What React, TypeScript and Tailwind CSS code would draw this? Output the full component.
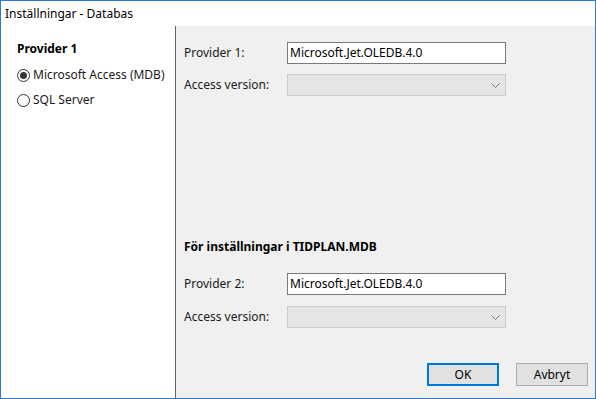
import React from "react";

function Radio({ checked, label }: { checked?: boolean; label: string }) {
  return (
    <label className="flex items-center h-[16px] gap-[3px]">
      <span className="w-[13px] h-[13px] rounded-full border border-[#333333] bg-white flex items-center justify-center">
        {checked && <span className="w-[7px] h-[7px] rounded-full bg-[#333333]" />}
      </span>
      <span>{label}</span>
    </label>
  );
}

function TextRow({ label, value }: { label: string; value: string }) {
  return (
    <div className="flex items-center h-[22px]">
      <span className="w-[103px]">{label}</span>
      <div className="w-[219px] h-[22px] border border-[#7a7a7a] bg-white flex items-center px-[2px] text-black">
        {value}
      </div>
    </div>
  );
}

function ComboRow({ label }: { label: string }) {
  return (
    <div className="flex items-center h-[22px]">
      <span className="w-[103px]">{label}</span>
      <div className="w-[219px] h-[22px] border border-[#cccccc] bg-[#e5e5e5] flex items-center justify-end pr-[5px]">
        <svg width="9" height="5" viewBox="0 0 9 5" className="text-[#7a7a7a]">
          <path d="M0.5 0.5 L4.5 4.5 L8.5 0.5" fill="none" stroke="currentColor" strokeWidth="1" />
        </svg>
      </div>
    </div>
  );
}

export default function App() {
  return (
    <div
      className="w-[596px] h-[399px] border border-[#2b7bd4] bg-white flex flex-col text-[12px] leading-[16px] text-[#1a1a1a]"
      style={{ fontFamily: '"Noto Sans", "Open Sans", sans-serif' }}
    >
      {/* Title bar */}
      <div className="h-[25px] flex items-center pl-[4px] text-black">Inställningar - Databas</div>

      <div className="flex flex-1">
        {/* Left list */}
        <div className="w-[175px] bg-white border-r border-[#646464] pl-[16px] pt-[15px]">
          <div className="font-bold text-black">Provider 1</div>
          <div className="mt-[10px] flex flex-col gap-[9px]">
            <Radio checked label="Microsoft Access (MDB)" />
            <Radio label="SQL Server" />
          </div>
        </div>

        {/* Settings */}
        <div className="flex-1 bg-[#f0f0f0] pl-[8px] pr-[7px] pt-[16px] pb-[12px] flex flex-col">
          <TextRow label="Provider 1:" value="Microsoft.Jet.OLEDB.4.0" />
          <div className="mt-[10px]">
            <ComboRow label="Access version:" />
          </div>

          <div className="mt-[143px] font-bold text-black">För inställningar i TIDPLAN.MDB</div>
          <div className="mt-[18px]">
            <TextRow label="Provider 2:" value="Microsoft.Jet.OLEDB.4.0" />
          </div>
          <div className="mt-[11px]">
            <ComboRow label="Access version:" />
          </div>

          <div className="mt-auto flex justify-end gap-[17px]">
            <button className="w-[72px] h-[23px] bg-[#e1e1e1] border-2 border-[#0078d7] text-black">OK</button>
            <button className="w-[72px] h-[23px] bg-[#e1e1e1] border border-[#adadad] text-black">Avbryt</button>
          </div>
        </div>
      </div>
    </div>
  );
}
